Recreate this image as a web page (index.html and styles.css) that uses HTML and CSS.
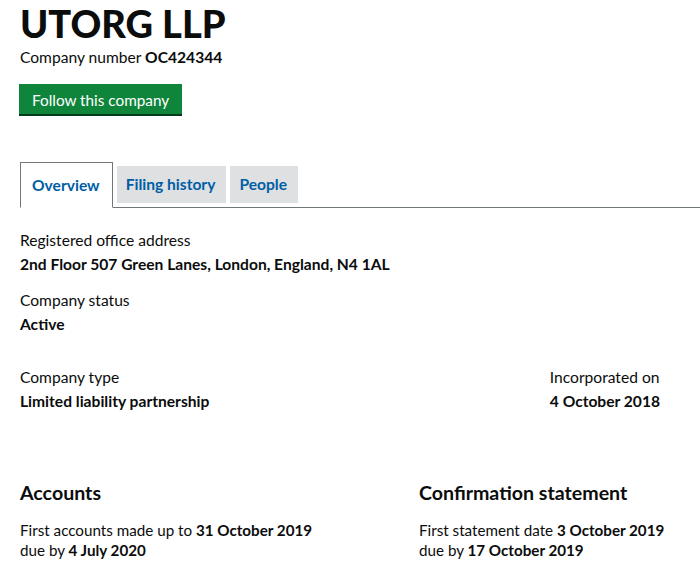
FILE: index.html
```html
<!DOCTYPE html>
<html lang="en">
<head>
<meta charset="utf-8">
<title>UTORG LLP</title>
<link rel="stylesheet" href="styles.css">
</head>
<body>
<main class="page">
  <h1 class="title">UTORG LLP</h1>
  <p class="company-number">Company number <strong>OC424344</strong></p>
  <a class="button" href="#">Follow this company</a>

  <nav class="tabs">
    <a class="tab tab-active" href="#">Overview</a>
    <a class="tab" href="#">Filing history</a>
    <a class="tab" href="#">People</a>
  </nav>

  <dl class="item">
    <dt>Registered office address</dt>
    <dd>2nd Floor 507 Green Lanes, London, England, N4 1AL</dd>
  </dl>
  <dl class="item">
    <dt>Company status</dt>
    <dd>Active</dd>
  </dl>

  <div class="split">
    <dl class="item">
      <dt>Company type</dt>
      <dd>Limited liability partnership</dd>
    </dl>
    <dl class="item">
      <dt>Incorporated on</dt>
      <dd>4 October 2018</dd>
    </dl>
  </div>

  <div class="columns">
    <section class="col">
      <h2 class="heading">Accounts</h2>
      <p class="line">First accounts made up to <strong>31 October 2019</strong></p>
      <p class="line">due by <strong>4 July 2020</strong></p>
    </section>
    <section class="col">
      <h2 class="heading">Confirmation statement</h2>
      <p class="line">First statement date <strong>3 October 2019</strong></p>
      <p class="line">due by <strong>17 October 2019</strong></p>
    </section>
  </div>
</main>
</body>
</html>
```

FILE: styles.css
```css
html, body {
  margin: 0;
  padding: 0;
  background: #ffffff;
}
body {
  font-family: Lato, "Open Sans", Arial, sans-serif;
  color: #0b0c0c;
  font-size: 15.6px;
}
.page {
  padding: 0 0 0 20px;
}
.title {
  margin: 0;
  font-size: 38px;
  line-height: 46px;
  font-weight: 900;
  letter-spacing: 0;
}
.company-number {
  margin: 0;
  font-size: 15.6px;
  line-height: 22px;
}
.company-number strong {
  font-weight: 700;
}
.button {
  display: block;
  width: max-content;
  margin-top: 16px;
  margin-left: -1px;
  background: #0f853c;
  color: #ffffff;
  text-decoration: none;
  font-size: 15.3px;
  line-height: 20px;
  padding: 6px 13px 4px 13px;
  box-shadow: 0 2px 0 #003b1b;
}
.tabs {
  display: flex;
  align-items: flex-end;
  margin-top: 48px;
  border-bottom: 1px solid #6f777b;
}
.tab {
  display: block;
  margin-right: 4px;
  margin-bottom: 4px;
  background: #dee0e2;
  color: #005ea5;
  font-weight: 700;
  font-size: 15.6px;
  line-height: 37px;
  padding: 0 11px 0 9px;
  text-decoration: none;
}
.tab-active {
  background: #ffffff;
  border: 1px solid #6f777b;
  border-bottom: 1px solid #ffffff;
  margin-bottom: -1px;
  margin-right: 4px;
  line-height: 44px;
  padding: 0 12px 0 11px;
}
.item {
  margin: 0;
}
.item dt {
  line-height: 24px;
}
.item dd {
  margin: 0;
  font-weight: 700;
  line-height: 24px;
}
.tabs + .item {
  margin-top: 20px;
}
.item + .item {
  margin-top: 12px;
}
.split {
  display: flex;
  justify-content: space-between;
  padding-right: 40px;
  margin-top: 29px;
}
.split .item + .item {
  margin-top: 0;
}
.columns {
  display: grid;
  grid-template-columns: 399px 1fr;
  margin-top: 66px;
}
.heading {
  margin: 0;
  font-size: 19.6px;
  line-height: 28px;
  font-weight: 700;
}
.line {
  margin: 0;
  font-size: 15.2px;
  line-height: 20px;
}
.heading + .line {
  margin-top: 13px;
}
.line strong {
  font-weight: 700;
}
```
